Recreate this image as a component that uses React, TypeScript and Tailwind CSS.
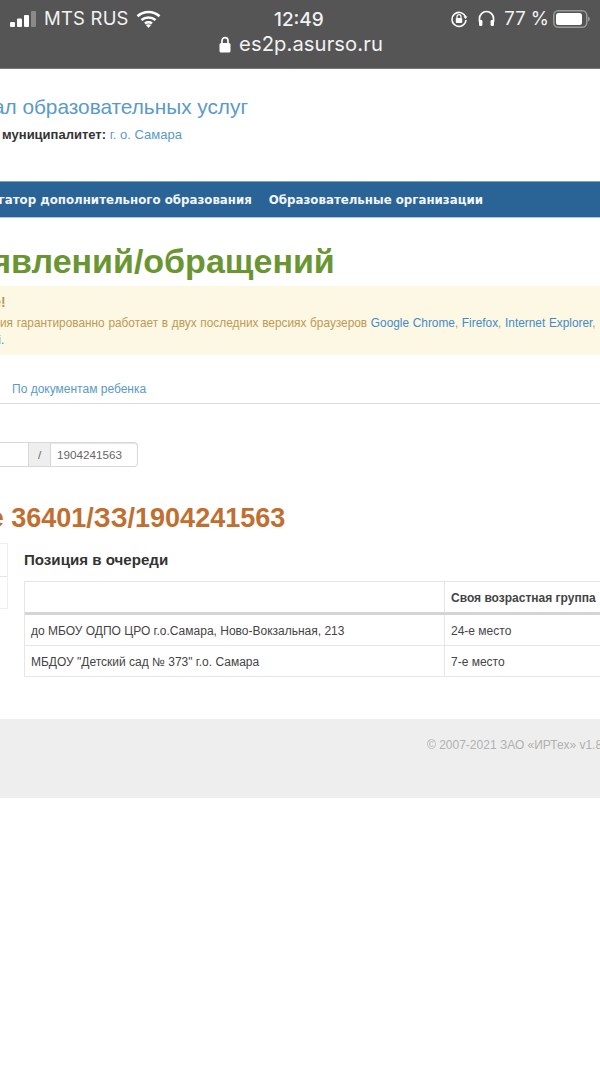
export default function App() {
  const sans = "font-['Liberation_Sans',Arial,sans-serif]";
  return (
    <div className={`w-[600px] h-[1066px] overflow-hidden bg-white flex flex-col ${sans} text-[#333]`}>
      {/* iOS bar */}
      <div className="h-[69px] shrink-0 bg-[#555555] border-b border-[#777] text-[#f2f2f2] flex flex-col font-['Inter',sans-serif]">
        <div className="h-[36px] relative flex items-center justify-between pl-[10px] pr-[10px] pt-[1px]">
          <div className="flex items-center">
            <svg width="26" height="18" viewBox="0 0 26 18" className="mr-[8px]">
              <rect x="0" y="12" width="5" height="5" rx="1" fill="#fff" />
              <rect x="7" y="8.5" width="5" height="8.5" rx="1" fill="#fff" />
              <rect x="14" y="5" width="5" height="12" rx="1" fill="#fff" />
              <rect x="21" y="1" width="5" height="16" rx="1" fill="#8a8a8a" />
            </svg>
            <span className="text-[18.5px] font-normal tracking-[0.2px]">MTS RUS</span>
            <svg width="25" height="18" viewBox="0 0 25 18" className="ml-[7px]" fill="none" stroke="#fff" strokeWidth="2.6">
              <path d="M1.5 6.2C7.6 0.6 17.4 0.6 23.5 6.2" />
              <path d="M5.5 10C9.4 6.6 15.6 6.6 19.5 10" />
              <path d="M9 13.5C10.9 12 14.1 12 16 13.5" />
              <path d="M12.5 18l-2.6-3c1.5-1 3.7-1 5.2 0z" fill="#fff" stroke="none" />
            </svg>
          </div>
          <span className="absolute left-[274px] top-[6px] text-[19px] font-medium">12:49</span>
          <div className="flex items-center">
            <svg width="18" height="18" viewBox="0 0 18 18" fill="none" stroke="#fff" strokeWidth="1.5" className="mr-[10px]">
              <path d="M15.6 7A7 7 0 1 0 16 10" />
              <path d="M13.5 6.5h4l-2 2.5z" fill="#fff" stroke="none" />
              <rect x="5.8" y="8" width="6.4" height="5" rx="0.8" fill="#fff" stroke="none" />
              <path d="M7 8V6.6a2 2 0 0 1 4 0V8" strokeWidth="1.2" />
            </svg>
            <svg width="17" height="17" viewBox="0 0 17 17" fill="none" stroke="#fff" strokeWidth="1.7" className="mr-[9px]">
              <path d="M1.5 12V8.5a7 7 0 0 1 14 0V12" />
              <rect x="1" y="10" width="3.4" height="6" rx="1.2" fill="#fff" stroke="none" />
              <rect x="12.6" y="10" width="3.4" height="6" rx="1.2" fill="#fff" stroke="none" />
            </svg>
            <span className="text-[18.5px] mr-[4px]">77 %</span>
            <svg width="37" height="18" viewBox="0 0 37 18">
              <rect x="0.75" y="0.75" width="33" height="16.5" rx="4.5" fill="none" stroke="#999" strokeWidth="1.5" />
              <rect x="3" y="3" width="26" height="12" rx="2.5" fill="#fff" />
              <path d="M35 6.5c1.2.4 1.8 1.3 1.8 2.5s-.6 2.1-1.8 2.5z" fill="#999" />
            </svg>
          </div>
        </div>
        <div className="flex items-center justify-center gap-[8px] h-[18px] ml-[2px] -mt-[1px]">
          <svg width="12" height="17" viewBox="0 0 12 17">
            <path d="M3 8V4.6a3 3 0 0 1 6 0V8" fill="none" stroke="#fff" strokeWidth="1.7" />
            <rect x="0.5" y="7" width="11" height="9.5" rx="1.6" fill="#fff" />
          </svg>
          <span className="text-[20.2px] leading-none tracking-[0.1px]">es2p.asurso.ru</span>
        </div>
      </div>

      {/* Header */}
      <div className="h-[112px] shrink-0 pt-[25px] whitespace-nowrap">
        <div className="ml-[-54px] text-[20.8px] leading-[26px] font-light text-[#5a9ac9]">Портал образовательных услуг</div>
        <div className="ml-[-80px] mt-[6px] text-[13px] leading-[17px]">
          <b>Выбранный муниципалитет:</b> <a className="text-[#5a9ac9]">г. о. Самара</a>
        </div>
      </div>

      {/* Nav */}
      <div className="h-[37px] shrink-0 bg-[#2a6496] border-t border-[#6fa5d0] border-b-[#a9c8e0] border-b flex items-center whitespace-nowrap font-['DejaVu_Sans',sans-serif] font-bold text-[11.8px] text-[#f2f5f8] pt-[3px]">
        <span className="ml-[-35px]">Навигатор дополнительного образования</span>
        <span className="ml-[17px]">Образовательные организации</span>
      </div>

      {/* H1 */}
      <div className="h-[68px] shrink-0 pt-[25px] whitespace-nowrap">
        <h1 className="ml-[-49px] text-[34px] leading-[36px] font-bold text-[#6a9632]">Заявлений/обращений</h1>
      </div>

      {/* Alert */}
      <div className="h-[69px] shrink-0 bg-[#fcf8e3] text-[#c09853] whitespace-nowrap pt-[7px]">
        <div className="ml-[-69px] h-[19px] text-[14px] font-bold leading-[19px]">Внимание!</div>
        <div className="ml-[-27px] mt-[3px] leading-[17px] text-[11.85px] [word-spacing:0.4px]">
          Версия гарантированно работает в двух последних версиях браузеров <a className="text-[#428bca]">Google Chrome</a>, <a className="text-[#428bca]">Firefox</a>, <a className="text-[#428bca]">Internet Explorer</a>,
        </div>
        <div className="ml-[-30px] leading-[17px] text-[11.85px] text-[#428bca]">Safari.</div>
      </div>

      {/* Tabs */}
      <div className="h-[49px] shrink-0 border-b border-[#dddddd] flex items-end pb-[5px]">
        <a className="ml-[12px] text-[12px] leading-[17px] text-[#5a9ac9]">По документам ребенка</a>
      </div>

      {/* Input group */}
      <div className="h-[25px] mt-[38px] shrink-0 flex text-[#666]">
        <div className="w-[28px] h-full border-y border-[#d8d8d8] bg-white" />
        <div className="w-[23px] h-full bg-[#eeeeee] border border-[#d8d8d8] flex items-center justify-center text-[11.7px]">/</div>
        <div className="w-[87px] h-full border border-l-0 border-[#d8d8d8] rounded-r-[4px] shadow-[inset_0_1px_1px_rgba(0,0,0,0.1)] flex items-center pl-[6px] text-[11.7px]">1904241563</div>
      </div>

      {/* Orange heading */}
      <div className="h-[76px] shrink-0 pt-[36px] whitespace-nowrap">
        <h2 className="ml-[-140px] text-[27px] leading-[30px] font-bold text-[#c06f30]">Заявление 36401/ЗЗ/1904241563</h2>
      </div>

      {/* Main */}
      <div className="h-[134px] shrink-0 flex">
        <div className="w-[8px] h-[66px] shrink-0 border-r border-y border-[#eeeeee] flex flex-col">
          <div className="h-[33px] border-b border-[#e5e5e5]" />
        </div>
        <div className="ml-[16px] grow min-w-0">
          <div className="h-[38px] pt-[7px] text-[15.1px] leading-[20px] font-bold text-[#333]">Позиция в очереди</div>
          <div className="w-[640px] border-x border-b border-[#e6e6e6] text-[12px] text-[#444]">
            <div className="flex h-[31px] border-t border-[#e6e6e6]">
              <div className="w-[420px] border-r border-[#e6e6e6]" />
              <div className="pl-[6px] pt-[1px] flex items-center font-bold">Своя возрастная группа</div>
            </div>
            <div className="h-[3px] bg-[#d4d4d4]" />
            <div className="flex h-[31px] border-b border-[#e6e6e6]">
              <div className="w-[420px] border-r border-[#e6e6e6] pl-[6px] pt-[2px] flex items-center">до МБОУ ОДПО ЦРО г.о.Самара, Ново-Вокзальная, 213</div>
              <div className="pl-[6px] pt-[2px] flex items-center">24-е место</div>
            </div>
            <div className="flex h-[30px]">
              <div className="w-[420px] border-r border-[#e6e6e6] pl-[6px] pt-[2px] flex items-center">МБДОУ "Детский сад № 373" г.о. Самара</div>
              <div className="pl-[6px] pt-[2px] flex items-center">7-е место</div>
            </div>
          </div>
        </div>
      </div>

      {/* spacer */}
      <div className="h-[42px] shrink-0" />

      {/* Footer */}
      <div className="h-[79px] shrink-0 bg-[#eeeeee] whitespace-nowrap pl-[427px] pt-[18px] text-[12px] leading-[16px] text-[#b0b0b0]">
        © 2007-2021 ЗАО «ИРТех» v1.8
      </div>
    </div>
  );
}
